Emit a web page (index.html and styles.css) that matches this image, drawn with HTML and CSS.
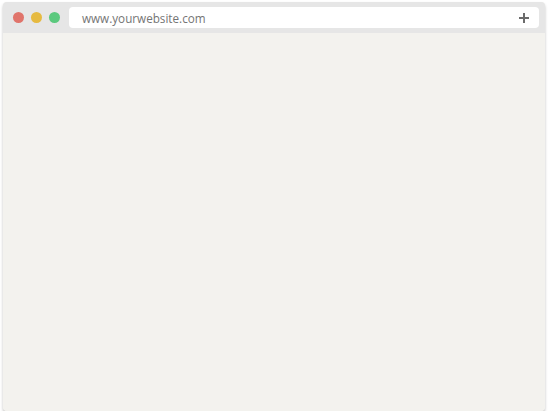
FILE: index.html
```html
<!DOCTYPE html>
<html>
<head>
<meta charset="utf-8">
<link rel="stylesheet" href="styles.css">
</head>
<body>
<div class="window">
  <div class="toolbar">
    <div class="dots">
      <span class="dot red"></span>
      <span class="dot yellow"></span>
      <span class="dot green"></span>
    </div>
    <div class="address">
      <span class="url">www.yourwebsite.com</span>
      <svg class="plus" width="10" height="10" viewBox="0 0 10 10"><path d="M5 0V10M0 5H10" stroke="#6b6b6b" stroke-width="2"/></svg>
    </div>
  </div>
  <div class="content"></div>
</div>
</body>
</html>
```
FILE: styles.css
```css
html, body { margin: 0; padding: 0; background: #ffffff; }
body { padding: 2px 3px 0 3px; }
.window {
  width: 542px;
  height: 409px;
  border-radius: 4px;
  overflow: hidden;
  display: flex;
  flex-direction: column;
  box-shadow: 0 2px 3px rgba(0,0,0,0.25);
  background: #f3f2ee;
}
.toolbar {
  height: 31px;
  background: #e6e6e6;
  display: flex;
  align-items: flex-start;
  padding: 5px 6px 0 10px;
  box-sizing: border-box;
}
.dots { display: flex; gap: 7px; margin-top: 5px; }
.dot { width: 11px; height: 11px; border-radius: 50%; display: block; }
.red { background: #e0746b; }
.yellow { background: #e6ba41; }
.green { background: #5bc97e; }
.address {
  margin-left: 9px;
  flex: 1;
  height: 21px;
  background: #ffffff;
  border-radius: 4px;
  display: flex;
  align-items: center;
  justify-content: space-between;
  padding: 0 10px 0 13px;
  box-sizing: border-box;
}
.url { font-family: "Open Sans", sans-serif; font-size: 11.7px; color: #747474; }
.plus { display: block; }
.content { flex: 1; background: #f3f2ee; }
```
